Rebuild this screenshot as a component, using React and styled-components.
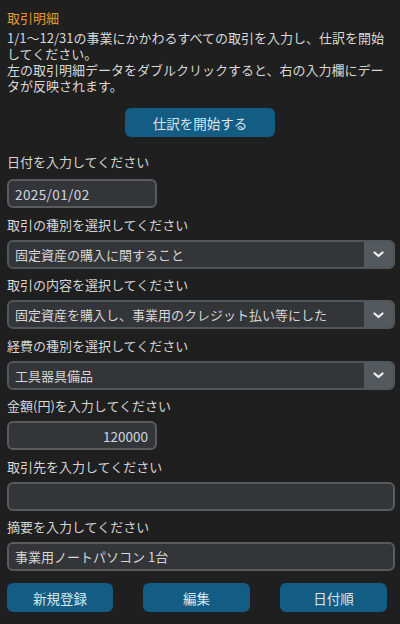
import React from "react";
import styled, { createGlobalStyle } from "styled-components";

const Global = createGlobalStyle`
  html, body { margin: 0; padding: 0; background: #1f1f1f; }
  body { font-family: "Noto Sans CJK JP", "Noto Sans", sans-serif; font-size: 13px; color: #d6d6d6; }
  * { box-sizing: border-box; }
`;

const Page = styled.div`
  width: 400px;
  min-height: 624px;
  background: #1f1f1f;
  padding: 9px 5px 0 7px;
  display: flex;
  flex-direction: column;
`;

const Title = styled.div`
  color: #e69a2e;
  font-size: 13px;
  line-height: 18px;
`;

const Intro = styled.p`
  margin: 3px 0 0;
  font-size: 13px;
  line-height: 16px;
  color: #d8d8d8;
`;

const BlueButton = styled.button`
  width: ${(p) => p.$w || 106}px;
  height: 29px;
  border: none;
  border-radius: 6px;
  background: #135c83;
  color: #dce6ec;
  font-family: inherit;
  font-size: 13.5px;
  padding: 0;
  cursor: pointer;
`;

const StartRow = styled.div`
  display: flex;
  justify-content: center;
  margin-top: 14px;
  padding-right: 2px;
`;

const Label = styled.div`
  line-height: 20px;
  padding: ${(p) => (p.$first ? "15px 0 7px" : "6.5px 0 5px")};
  color: #d6d6d6;
`;

const Field = styled.div`
  width: ${(p) => (p.$narrow ? "150px" : "100%")};
  height: 29px;
  border: 2px solid #585c5f;
  border-radius: 6px;
  background: #333538;
  display: flex;
  align-items: center;
  justify-content: ${(p) => (p.$right ? "flex-end" : "flex-start")};
  padding: 0 7px 0 6px;
  color: #d6d6d6;
  font-size: 13px;
  overflow: hidden;
  white-space: nowrap;
`;

const Number = styled.span`
  color: #cfd8e2;
  font-size: 13.5px;
  letter-spacing: ${(p) => (p.$wide ? "0.4px" : "0")};
`;

const SelectBox = styled.div`
  width: 100%;
  height: 29px;
  border: 2px solid #50575a;
  border-radius: 6px;
  background: #333538;
  display: flex;
  overflow: hidden;
`;

const SelectText = styled.div`
  flex: 1;
  display: flex;
  align-items: center;
  padding: 0 6px;
  white-space: nowrap;
  overflow: hidden;
  color: #d6d6d6;
`;

const Arrow = styled.div`
  width: 29px;
  background: #53595c;
  display: flex;
  align-items: center;
  justify-content: center;
  padding-top: 1px;
`;

const ButtonRow = styled.div`
  display: flex;
  gap: 30px;
  margin-top: 12px;
`;

const Chevron = () => (
  <svg width="11" height="7" viewBox="0 0 11 7">
    <path d="M1.5 1.5 L5.5 5 L9.5 1.5" fill="none" stroke="#f0f0f0" strokeWidth="2.2" strokeLinecap="round" strokeLinejoin="round" />
  </svg>
);

const Select = ({ children }) => (
  <SelectBox>
    <SelectText>{children}</SelectText>
    <Arrow>
      <Chevron />
    </Arrow>
  </SelectBox>
);

export default function App() {
  return (
    <>
      <Global />
      <Page>
        <Title>取引明細</Title>
        <Intro>
          1/1〜12/31の事業にかかわるすべての取引を入力し、仕訳を開始してください。
          <br />
          左の取引明細データをダブルクリックすると、右の入力欄にデータが反映されます。
        </Intro>
        <StartRow>
          <BlueButton $w={150}>仕訳を開始する</BlueButton>
        </StartRow>
        <Label $first>日付を入力してください</Label>
        <Field $narrow>
          <Number $wide>2025/01/02</Number>
        </Field>
        <Label>取引の種別を選択してください</Label>
        <Select>固定資産の購入に関すること</Select>
        <Label>取引の内容を選択してください</Label>
        <Select>固定資産を購入し、事業用のクレジット払い等にした</Select>
        <Label>経費の種別を選択してください</Label>
        <Select>工具器具備品</Select>
        <Label>金額(円)を入力してください</Label>
        <Field $narrow $right>
          <Number>120000</Number>
        </Field>
        <Label>取引先を入力してください</Label>
        <Field />
        <Label>摘要を入力してください</Label>
        <Field>事業用ノートパソコン 1台</Field>
        <ButtonRow>
          <BlueButton>新規登録</BlueButton>
          <BlueButton $w={107}>編集</BlueButton>
          <BlueButton $w={107}>日付順</BlueButton>
        </ButtonRow>
      </Page>
    </>
  );
}
